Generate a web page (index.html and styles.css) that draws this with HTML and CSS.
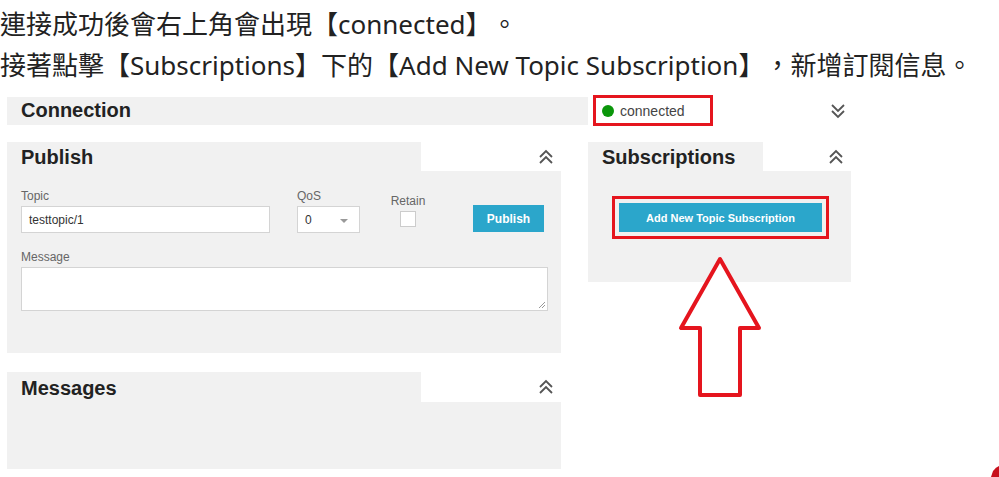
FILE: index.html
```html
<!DOCTYPE html>
<html lang="zh-Hant">
<head>
    <meta charset="UTF-8">
    <title>MQTT 訂閱說明</title>
    <link rel="stylesheet" href="styles.css">
</head>
<body>
<div class="note">
    <p>連接成功後會右上角會出現【connected】。</p>
    <p>接著點擊【Subscriptions】下的【Add New Topic Subscription】，新增訂閱信息。</p>
</div>

<div class="app">
    <div class="conn-row">
        <div class="conn-bar"><h2>Connection</h2></div>
        <div class="status mark"><span class="dot"></span>connected</div>
        <svg class="chev chev-conn" width="16" height="18" viewBox="0 0 16 18">
            <polyline points="2,3 8,9 14,3"/>
            <polyline points="2,9 8,15 14,9"/>
        </svg>
    </div>

    <div class="cols">
        <div class="col-left">
            <section class="panel">
                <div class="panel-head">
                    <div class="tab tab-wide"><h2>Publish</h2></div>
                    <svg class="chev" width="16" height="18" viewBox="0 0 16 18">
                        <polyline points="2,9 8,3 14,9"/>
                        <polyline points="2,15 8,9 14,15"/>
                    </svg>
                </div>
                <div class="panel-body publish-body">
                    <div class="pub-row">
                        <div class="field f-topic">
                            <label>Topic</label>
                            <div class="input">testtopic/1</div>
                        </div>
                        <div class="field f-qos">
                            <label>QoS</label>
                            <div class="input select">0<span class="caret"></span></div>
                        </div>
                        <div class="field f-retain">
                            <label>Retain</label>
                            <div class="checkbox"></div>
                        </div>
                        <button class="btn btn-publish">Publish</button>
                    </div>
                    <div class="field f-message">
                        <label>Message</label>
                        <div class="textarea">
                            <svg class="grip" width="7" height="7" viewBox="0 0 7 7">
                                <line x1="1" y1="7" x2="7" y2="1"/>
                                <line x1="4" y1="7" x2="7" y2="4"/>
                            </svg>
                        </div>
                    </div>
                </div>
            </section>

            <section class="panel messages">
                <div class="panel-head">
                    <div class="tab tab-wide"><h2>Messages</h2></div>
                    <svg class="chev" width="16" height="18" viewBox="0 0 16 18">
                        <polyline points="2,9 8,3 14,9"/>
                        <polyline points="2,15 8,9 14,15"/>
                    </svg>
                </div>
                <div class="panel-body messages-body"></div>
            </section>
        </div>

        <div class="col-right">
            <section class="panel">
                <div class="panel-head">
                    <div class="tab tab-subs"><h2>Subscriptions</h2></div>
                    <svg class="chev" width="16" height="18" viewBox="0 0 16 18">
                        <polyline points="2,9 8,3 14,9"/>
                        <polyline points="2,15 8,9 14,15"/>
                    </svg>
                </div>
                <div class="panel-body subs-body">
                    <div class="mark mark-btn">
                        <button class="btn btn-add">Add New Topic Subscription</button>
                    </div>
                </div>
            </section>

            <!-- annotation arrow pointing at the button -->
            <svg class="arrow" width="90" height="146" viewBox="0 0 90 146">
                <polygon points="44,4 5,73 24,73 24,140 64,140 64,73 83,73"/>
            </svg>
        </div>
    </div>
</div>

<svg class="corner" width="10" height="12" viewBox="0 0 10 12">
    <path d="M2 12 L4 6 Q7 2 10 1 L10 12 Z"/>
</svg>
</body>
</html>
```

FILE: styles.css
```css
body {
    margin: 0;
    background: #fff;
    font-family: "Liberation Sans", Arial, sans-serif;
    color: #222;
    width: 999px;
    height: 477px;
    position: relative;
    overflow: hidden;
}

.note {
    padding-top: 4px;
    font-family: "Noto Sans", "Noto Sans CJK TC", sans-serif;
    font-size: 26px;
    color: #222;
    text-spacing-trim: space-all;
}

.note p {
    margin: 0;
    line-height: 41px;
    white-space: nowrap;
}

.app {
    margin-top: 9px;
    width: 851px;
}

h2 {
    margin: 0;
    font-size: 20px;
    font-weight: bold;
    color: #222;
}

.mark {
    border: 3px solid #e5151e;
    box-sizing: border-box;
}

/* connection row */
.conn-row {
    display: flex;
    align-items: center;
    height: 31px;
}

.conn-bar {
    margin-left: 7px;
    width: 581px;
    height: 28px;
    background: #f1f1f1;
    display: flex;
    align-items: center;
    padding-left: 14px;
    box-sizing: border-box;
}

.status {
    margin-left: 5px;
    width: 120px;
    height: 31px;
    display: flex;
    align-items: center;
    padding-left: 6px;
    font-size: 14px;
    color: #444;
}

.dot {
    width: 12px;
    height: 12px;
    border-radius: 50%;
    background: #0a960a;
    margin-right: 6px;
}

.chev {
    fill: none;
    stroke: #555;
    stroke-width: 1.8;
}

.chev-conn {
    margin-left: auto;
    margin-right: 5px;
}

/* columns */
.cols {
    display: flex;
    margin-top: 16px;
}

.col-left {
    margin-left: 7px;
    width: 554px;
}

.col-right {
    margin-left: 27px;
    width: 263px;
    position: relative;
}

.panel-head {
    display: flex;
    align-items: center;
    justify-content: space-between;
    height: 29px;
}

.panel-head .chev {
    margin-right: 7px;
}

.tab {
    height: 100%;
    background: #f1f1f1;
    display: flex;
    align-items: center;
    padding-left: 14px;
    padding-top: 2px;
    box-sizing: border-box;
}

.tab-wide {
    width: 414px;
}

.tab-subs {
    width: 175px;
}

.panel-body {
    background: #f1f1f1;
}

/* publish */
.publish-body {
    height: 182px;
    padding: 18px 13px 0 14px;
    box-sizing: border-box;
}

.pub-row {
    display: flex;
    align-items: flex-end;
}

.field label {
    display: block;
    font-size: 12px;
    line-height: 14px;
    color: #666;
    margin-bottom: 3px;
}

.input {
    height: 27px;
    background: #fff;
    border: 1px solid #d4d4d4;
    box-sizing: border-box;
    font-size: 12px;
    color: #333;
    display: flex;
    align-items: center;
    padding-left: 7px;
}

.f-topic {
    width: 249px;
}

.f-qos {
    margin-left: 27px;
    width: 63px;
}

.select {
    position: relative;
}

.caret {
    position: absolute;
    right: 11px;
    top: 12px;
    border-left: 4px solid transparent;
    border-right: 4px solid transparent;
    border-top: 4px solid #999;
}

.f-retain {
    margin-left: 30px;
    width: 36px;
    display: flex;
    flex-direction: column;
    align-items: center;
    padding-bottom: 6px;
}

.checkbox {
    width: 14px;
    height: 14px;
    background: #fff;
    border: 1px solid #ccc;
}

.btn {
    border: 0;
    background: #2ba6cb;
    color: #fff;
    font-family: "Liberation Sans", Arial, sans-serif;
    font-weight: bold;
    padding: 0;
}

.btn-publish {
    margin-left: 47px;
    margin-bottom: 1px;
    width: 71px;
    height: 27px;
    font-size: 12px;
}

.f-message {
    margin-top: 17px;
}

.textarea {
    height: 44px;
    background: #fff;
    border: 1px solid #d4d4d4;
    box-sizing: border-box;
    display: flex;
    justify-content: flex-end;
    align-items: flex-end;
    padding: 2px;
}

.grip {
    stroke: #999;
    stroke-width: 1;
}

/* messages */
.messages {
    margin-top: 19px;
}

.messages .panel-head {
    height: 30px;
}

.messages-body {
    height: 67px;
}

/* subscriptions */
.subs-body {
    height: 111px;
    padding: 25px 0 0 24px;
    box-sizing: border-box;
}

.mark-btn {
    width: 217px;
    height: 43px;
    padding: 4px;
}

.btn-add {
    width: 100%;
    height: 100%;
    font-size: 11px;
}

.arrow {
    position: absolute;
    left: 88px;
    top: 113px;
    fill: #fff;
    stroke: #e5151e;
    stroke-width: 4;
    stroke-linejoin: round;
}

.corner {
    position: absolute;
    right: 0;
    bottom: 0;
    fill: #c8101c;
}
```
